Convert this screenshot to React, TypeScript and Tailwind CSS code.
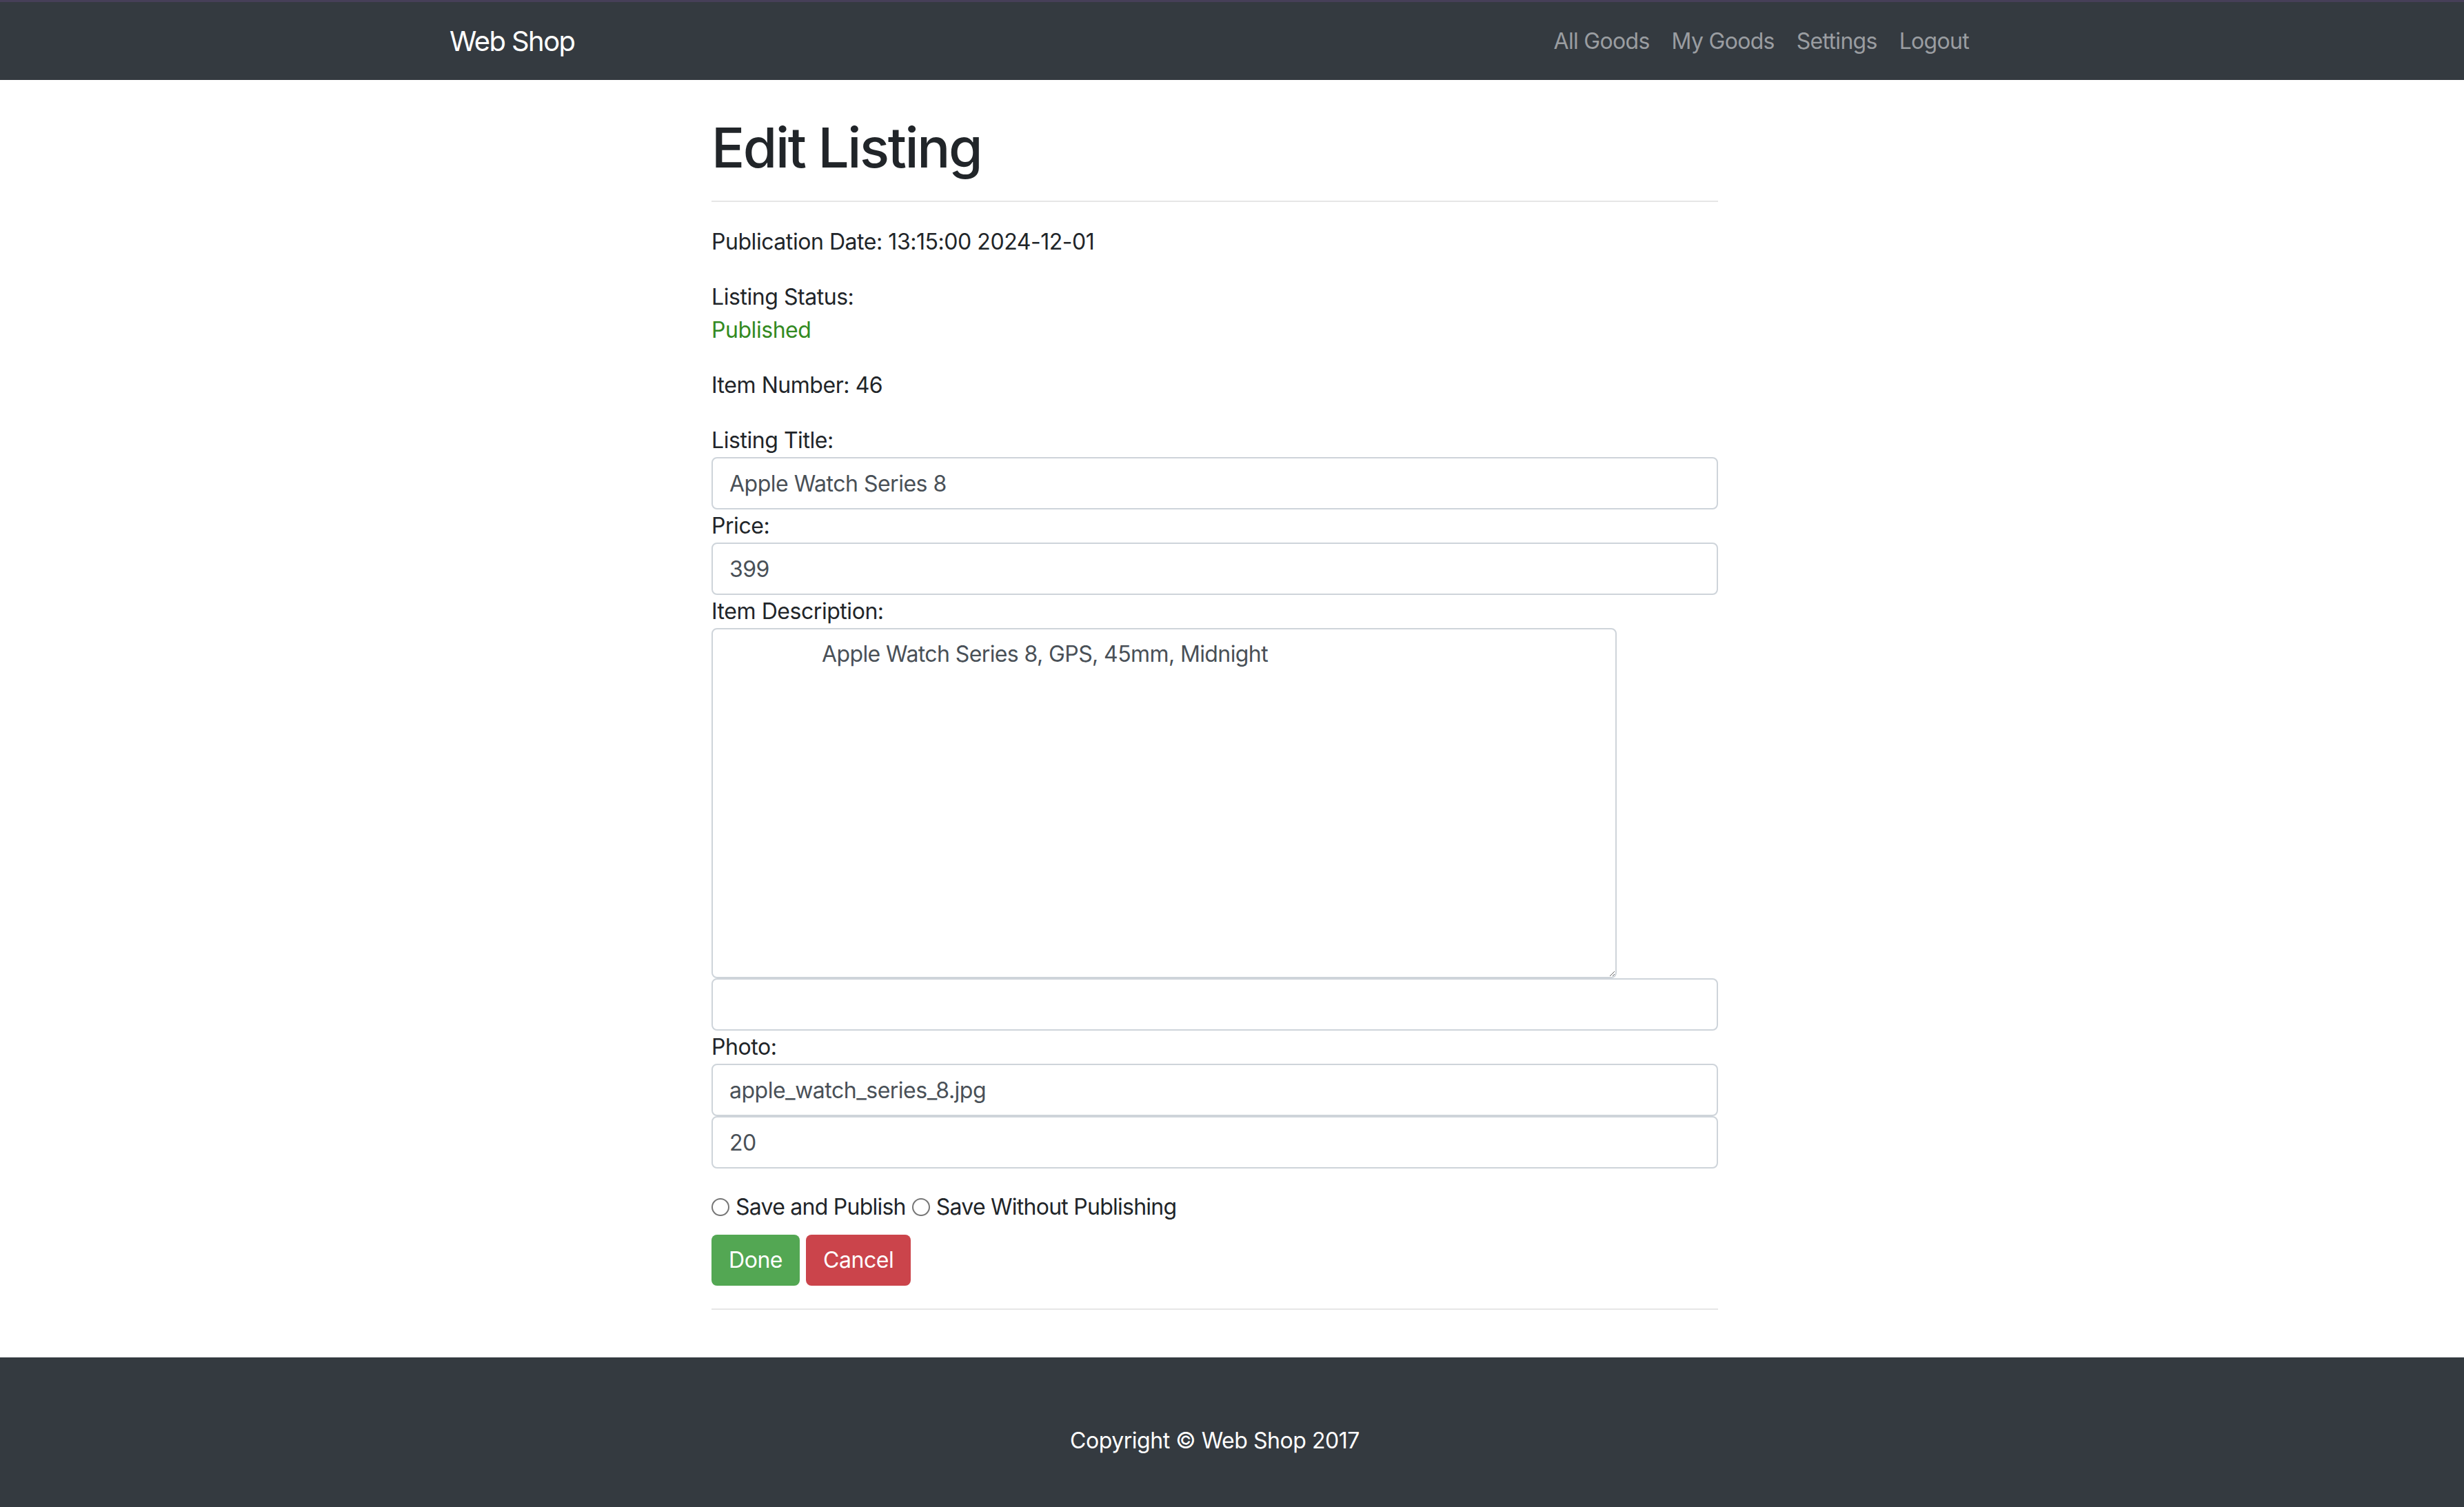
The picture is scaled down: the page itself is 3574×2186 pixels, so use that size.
import React from 'react';

function Field({ label, value }: { label?: string; value: string }) {
  return (
    <>
      {label && <label className="block h-[48px] leading-[48px]">{label}</label>}
      <input
        type="text"
        defaultValue={value}
        className="block w-full h-[76px] px-[24px] border-2 border-[#ced4da] rounded-[8px] text-[32px] tracking-[-0.5px] text-[#495057] bg-white outline-none"
      />
    </>
  );
}

export default function App() {
  return (
    <div className="min-h-screen bg-white font-['Inter','Noto_Sans',sans-serif] text-[32px] leading-[48px] tracking-[-0.45px] text-[#212529]">
      {/* Navbar */}
      <nav className="h-[116px] bg-[#343a40] border-t-[3px] border-[#463f58]">
        <div className="pr-[50px] h-full">
          <div className="mx-auto w-[2280px] h-full px-[30px] flex items-center justify-between">
            <a className="text-[40px] leading-[60px] tracking-[-1.6px] text-white">Web Shop</a>
            <ul className="flex items-center tracking-[-0.7px]">
              {['All Goods', 'My Goods', 'Settings', 'Logout'].map((item) => (
                <li key={item}>
                  <a className="block px-[16px] text-[#9a9da1]">{item}</a>
                </li>
              ))}
            </ul>
          </div>
        </div>
      </nav>

      {/* Content */}
      <div className="pr-[50px]">
        <div className="mx-auto w-[1460px] pt-[50px]">
          <h1 className="text-[80px] leading-[96px] font-medium tracking-[-2.4px]">Edit Listing</h1>
          <hr className="mt-[29px] mb-[34px] border-t-2 border-[#e6e6e6]" />

          <p className="mb-[32px]">Publication Date: 13:15:00 2024-12-01</p>
          <div className="mb-[32px]">
            <p>Listing Status:</p>
            <p className="text-[#338a22]">Published</p>
          </div>
          <p className="mb-[32px]">Item Number: 46</p>

          <form>
            <Field label="Listing Title:" value="Apple Watch Series 8" />
            <Field label="Price:" value="399" />
            <label className="block h-[48px] leading-[48px]">Item Description:</label>
            <textarea
              defaultValue="Apple Watch Series 8, GPS, 45mm, Midnight"
              className="block w-[1313px] h-[508px] px-[24px] py-[12px] indent-[134px] border-2 border-[#ced4da] rounded-[8px] text-[32px] leading-[48px] tracking-[-0.6px] text-[#495057] outline-none"
            />
            <Field value="" />
            <Field label="Photo:" value="apple_watch_series_8.jpg" />
            <Field value="20" />

            <div className="mt-[32px] flex items-center tracking-[-0.75px]">
              <input
                type="radio"
                name="publish"
                className="appearance-none w-[26px] h-[26px] rounded-full border-2 border-[#767676] bg-white"
              />
              <span className="ml-[9px] mr-[9px]">Save and Publish</span>
              <input
                type="radio"
                name="publish"
                className="appearance-none w-[26px] h-[26px] rounded-full border-2 border-[#767676] bg-white"
              />
              <span className="ml-[9px]">Save Without Publishing</span>
            </div>

            <div className="mt-[16px] flex gap-[9px]">
              <button type="button" className="h-[74px] px-[25px] rounded-[8px] bg-[#53a753] text-white">
                Done
              </button>
              <button type="button" className="h-[74px] px-[25px] rounded-[8px] bg-[#cb444b] text-white">
                Cancel
              </button>
            </div>
          </form>

          <hr className="mt-[33px] border-t-2 border-[#e6e6e6]" />
        </div>
      </div>

      {/* Footer */}
      <footer className="mt-[69px] bg-[#343a40] pt-[97px] pb-[72px]">
        <div className="pr-[50px]">
          <p className="text-center text-white">Copyright © Web Shop 2017</p>
        </div>
      </footer>
    </div>
  );
}
